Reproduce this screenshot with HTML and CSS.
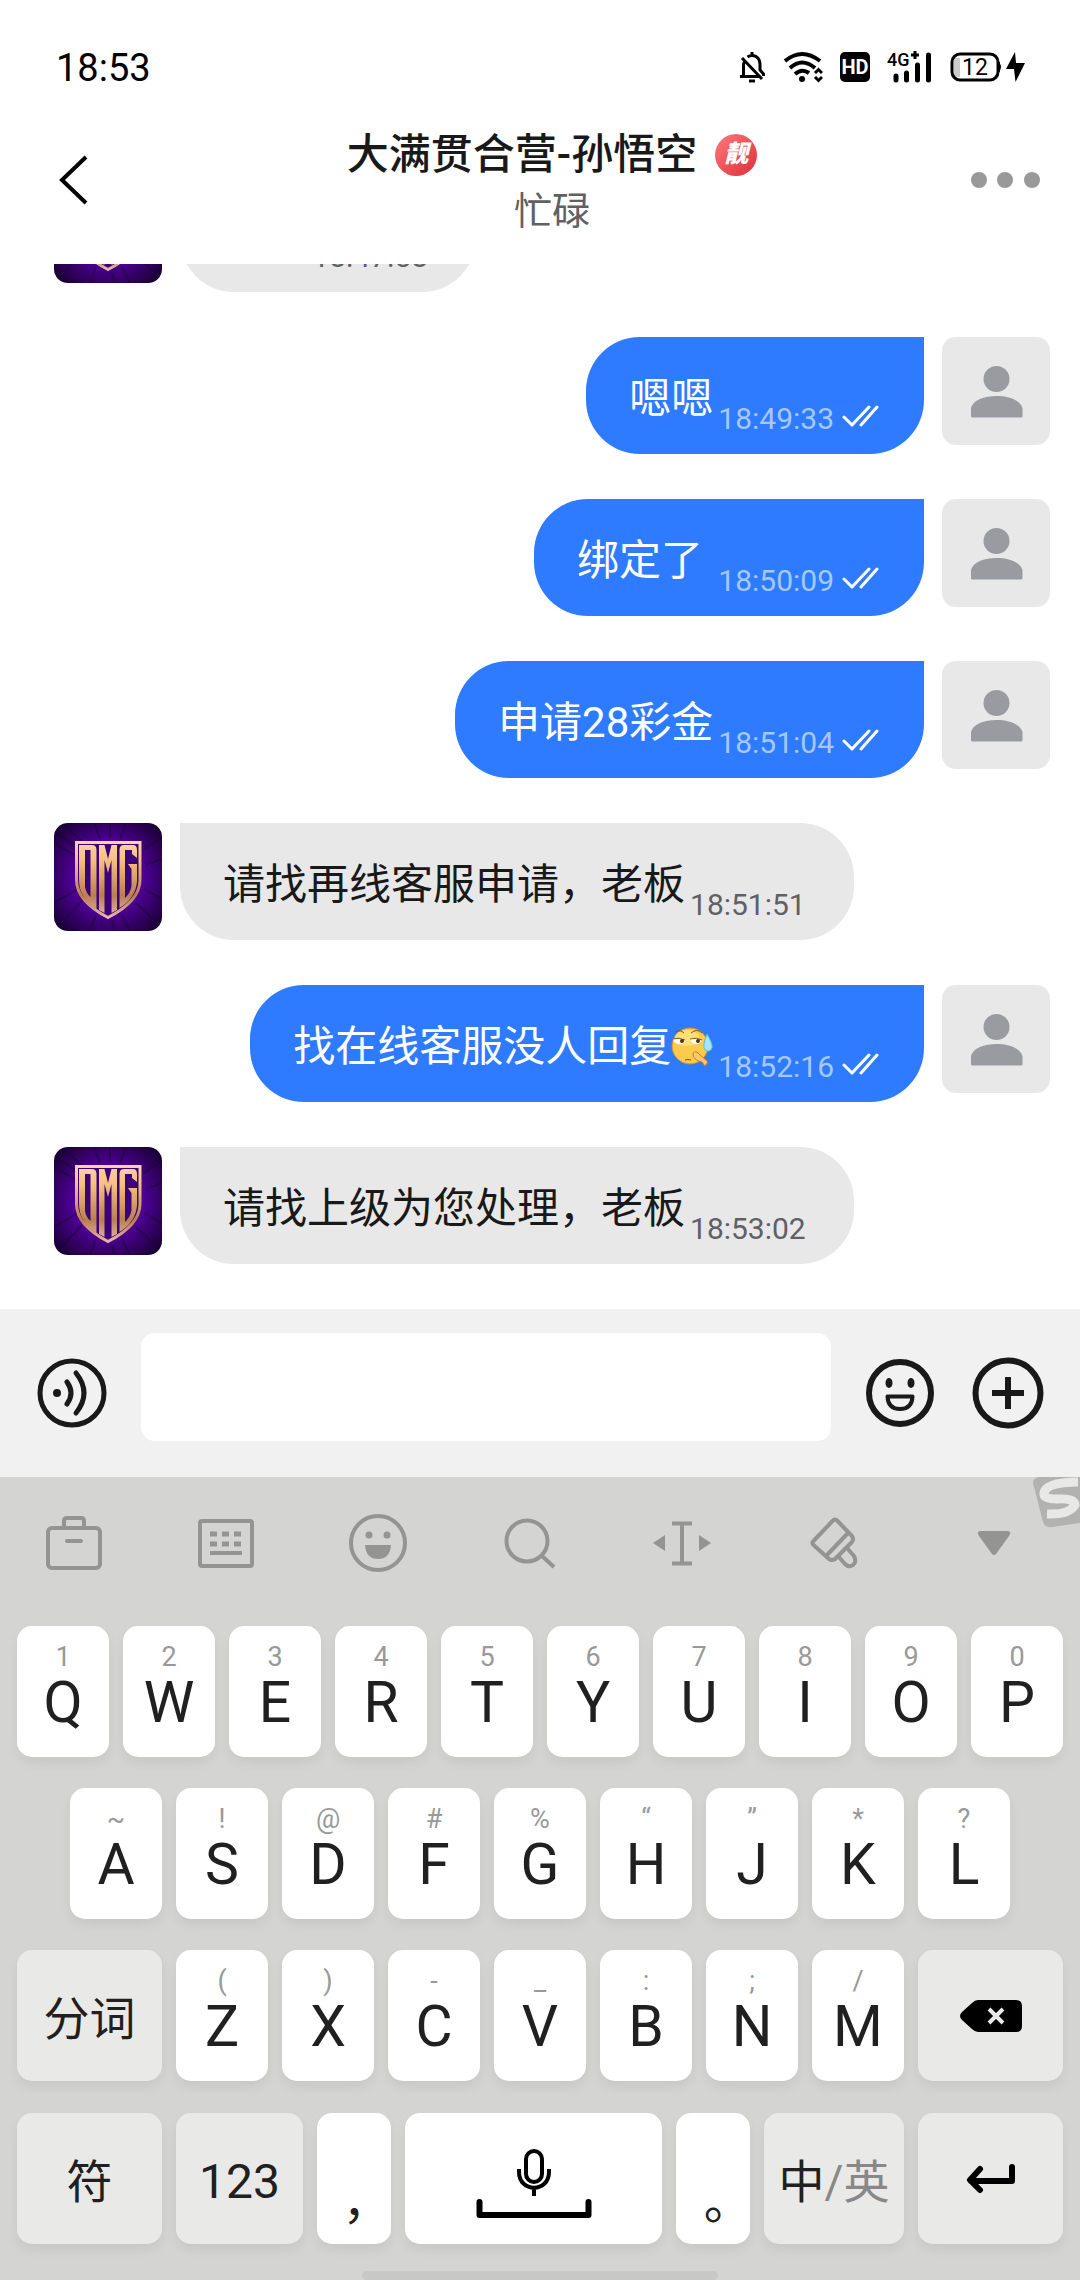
FILE: index.html
```html
<!DOCTYPE html>
<html lang="zh-CN">
<head>
<meta charset="utf-8">
<meta name="viewport" content="width=device-width, initial-scale=1">
<title>大满贯合营-孙悟空</title>
<link rel="stylesheet" href="styles.css">
</head>
<body>
<svg class="sprite" aria-hidden="true">
  <defs>
    <radialGradient id="glow" cx="50%" cy="50%" r="68%">
      <stop offset="0" stop-color="#7d00dc"/><stop offset=".5" stop-color="#4c0092"/><stop offset="1" stop-color="#14002a"/>
    </radialGradient>
    <linearGradient id="gold" x1="0" y1="18" x2="0" y2="96" gradientUnits="userSpaceOnUse">
      <stop offset="0" stop-color="#fbd3a8"/><stop offset=".25" stop-color="#f6bf82"/><stop offset=".7" stop-color="#b97f52"/><stop offset="1" stop-color="#eab9b0"/>
    </linearGradient>
    <symbol id="emblem" viewBox="0 0 108 108">
      <rect width="108" height="108" fill="url(#glow)"/>
      <path d="M0 20L34 40M0 8L30 30M8 0L36 26M40 0L46 16M56 0V14M72 0L66 16M108 14L90 26M108 36L92 42M0 80L24 66M4 104L28 78M36 108L42 92M60 108L58 98M76 108L68 92M104 100L82 80M108 76L90 66" stroke="#1b0036" stroke-width="2" opacity=".5" fill="none"/>
      <path d="M22.500 19.500H86V57Q86 78 54 94.500Q22.500 78 22.500 57Z" fill="#3d0078" stroke="url(#gold)" stroke-width="3"/>
      <path fill="url(#gold)" fill-rule="evenodd" d="M25 22H38Q42.500 22 42.500 27V86Q25 75 25 57ZM31 27V64Q32 70 36.500 74V27Z"/>
      <path fill="url(#gold)" d="M45 22H50.500L54 36L57.500 22H63V87L57.500 90V37L54 50L50.500 37V90L45 87Z"/>
      <path fill="url(#gold)" d="M70 22H79Q83 22 83 27V35L78 31V27H71V75Q76.500 70 77.500 63V46L74 41H83V58Q82 75 65.500 85V27Q65.500 22 70 22Z"/>
    </symbol>
    <symbol id="person" viewBox="0 0 108 108">
      <circle cx="54.500" cy="42" r="13"/>
      <path d="M29 79V71C31 63 42 59 54.500 59S78 63 80.500 71V79Q80.500 80.500 79 80.500H30.500Q29 80.500 29 79Z"/>
    </symbol>
    <symbol id="read" viewBox="0 0 37 24">
      <path d="M2 13L10 21L27 3M19 21L35 3" fill="none" stroke="#fff" stroke-width="3" stroke-linecap="round" stroke-linejoin="round"/>
    </symbol>
  </defs>
</svg>

<div class="app">
  <div class="status">
    <span class="clock">18:53</span>
    <div class="status-icons">
      <svg width="28" height="32" viewBox="0 0 28 32" fill="none" stroke="#000" stroke-width="3">
        <path d="M2 25.500H21M5.500 25V15Q5.500 12 7 9.500M9.500 6Q11.500 4.500 14 4.500C19 4.500 22 8.500 22 13V19L25.500 23V25M14 1V5M4 7L24 28"/>
        <path d="M11 30H17" stroke-width="3"/>
      </svg>
      <svg width="40" height="32" viewBox="0 0 40 32" fill="none" stroke="#000" stroke-width="4">
        <path d="M2 10Q19 -4 37 10M7 17Q19 6 32 17M12 23Q19 17 26 22"/>
        <circle cx="19" cy="28" r="3" fill="#000" stroke="none"/>
        <path d="M32 22L35.500 18.500L39 22M32 26L35.500 29.500L39 26" stroke-width="3"/>
      </svg>
      <svg width="30" height="32" viewBox="0 0 30 32">
        <rect y="1" width="30" height="30" rx="5"/>
        <text class="hd" x="15" y="23" text-anchor="middle">HD</text>
      </svg>
      <svg class="signal" width="46" height="32" viewBox="0 0 46 32">
        <text class="net" x="0" y="15">4G</text>
        <path d="M28 0V8M24 4H32" stroke="#000" stroke-width="3"/>
        <path d="M9 25V29M19.500 22V29M30.500 14V29M41.500 4V29" stroke="#000" stroke-width="5" stroke-linecap="round"/>
      </svg>
      <svg width="76" height="32" viewBox="0 0 76 32">
        <path d="M4 7H10V26H4Z" fill="#ccc"/>
        <rect x="2" y="3" width="46" height="26" rx="8" fill="none" stroke="#000" stroke-width="3"/>
        <path d="M49 11Q52 16 49 21Z" stroke="#000"/>
        <text class="charge" x="25" y="24" text-anchor="middle">12</text>
        <path d="M65 1L56 18H64L65.500 31L75 12H66Z"/>
      </svg>
    </div>
  </div>

  <header class="header">
    <button class="back" aria-label="返回">
      <svg width="30" height="50" viewBox="0 0 30 50" fill="none" stroke="#000" stroke-width="4"><path d="M28 2L4 25L28 48"/></svg>
    </button>
    <div class="heading">
      <h1 class="title">大满贯合营-孙悟空<span class="badge">靓</span></h1>
      <p class="state">忙碌</p>
    </div>
    <button class="more" aria-label="更多">
      <svg width="70" height="16" viewBox="0 0 70 16" fill="#999"><circle cx="8" cy="8" r="8"/><circle cx="34" cy="8" r="8"/><circle cx="61" cy="8" r="8"/></svg>
    </button>
  </header>

  <main class="messages">
    <div class="message">
      <svg class="avatar"><use href="#emblem"/></svg>
      <div class="bubble short"><time>18:47:58</time></div>
    </div>
    <div class="message own">
      <svg class="avatar"><use href="#person"/></svg>
      <div class="bubble"><span class="text">嗯嗯</span><time>18:49:33</time><svg class="tick"><use href="#read"/></svg></div>
    </div>
    <div class="message own">
      <svg class="avatar"><use href="#person"/></svg>
      <div class="bubble"><span class="text">绑定了 </span><time>18:50:09</time><svg class="tick"><use href="#read"/></svg></div>
    </div>
    <div class="message own">
      <svg class="avatar"><use href="#person"/></svg>
      <div class="bubble"><span class="text">申请28彩金</span><time>18:51:04</time><svg class="tick"><use href="#read"/></svg></div>
    </div>
    <div class="message">
      <svg class="avatar"><use href="#emblem"/></svg>
      <div class="bubble"><span class="text">请找再线客服申请，老板</span><time>18:51:51</time></div>
    </div>
    <div class="message own">
      <svg class="avatar"><use href="#person"/></svg>
      <div class="bubble"><span class="text">找在线客服没人回复<svg class="emoji" viewBox="0 0 42 42">
        <circle cx="19" cy="20" r="18" fill="#fbcb4c" stroke="#d58a24"/>
        <ellipse cx="16" cy="12" rx="12" ry="8" fill="#ffe78c" opacity=".7"/>
        <path d="M2 13Q8 12 14 14Q13 19 7 18Q3 17 2 13ZM19 13Q25 12 31 14Q29 19 24 18Q20 17 19 13Z" fill="#fff"/>
        <path d="M2 13Q8 11 14 14M19 13Q26 11 31 14M4 6Q9 3 13 7M20 7Q26 2 31 7" stroke="#8a5220" stroke-width="1" fill="none"/>
        <circle cx="11" cy="15" r="2" fill="#543010"/><circle cx="27" cy="15" r="2" fill="#543010"/>
        <path d="M14 34Q17 33 20 34" stroke="#8a4b18" fill="none"/>
        <path d="M22 28Q23 24 27 27L37 36L34 40L31 36Q22 34 22 28Z" fill="#ffc96a" stroke="#cf7d28"/>
        <path d="M36 8Q42 18 41 22Q39 27 34 24Q31 20 36 8Z" fill="#a5e6f4" stroke="#5fb8dd"/>
      </svg></span><time>18:52:16</time><svg class="tick"><use href="#read"/></svg></div>
    </div>
    <div class="message">
      <svg class="avatar"><use href="#emblem"/></svg>
      <div class="bubble"><span class="text">请找上级为您处理，老板</span><time>18:53:02</time></div>
    </div>
  </main>

  <form class="composer">
    <button type="button" aria-label="语音">
      <svg width="72" height="72" viewBox="0 0 72 72" fill="none" stroke="#191919" stroke-width="5">
        <circle cx="36" cy="36" r="32"/><circle cx="21" cy="36" r="4" fill="#191919" stroke="none"/>
        <path d="M31 25Q39 36 31 47M40 16Q56 36 40 56" stroke-linecap="round"/>
      </svg>
    </button>
    <input class="entry" type="text" aria-label="消息">
    <button type="button" aria-label="表情">
      <svg width="72" height="72" viewBox="0 0 72 72" fill="none" stroke="#191919" stroke-width="6">
        <circle cx="36" cy="36" r="31"/>
        <path d="M23.500 39.500H48.500Q48 52 36 52T23.500 39.500Z" stroke-width="4" stroke-linejoin="round"/>
        <g fill="#191919" stroke="none"><ellipse cx="25" cy="26" rx="3.500" ry="5"/><ellipse cx="47" cy="26" rx="3.500" ry="5"/></g>
      </svg>
    </button>
    <button type="button" class="plus" aria-label="添加">
      <svg width="72" height="72" viewBox="0 0 72 72" fill="none" stroke="#191919" stroke-width="6"><circle cx="36" cy="36" r="32.500"/><path d="M36 20V52M20 36H52"/></svg>
    </button>
  </form>

  <section class="keyboard" aria-label="键盘">
    <svg class="sogou" viewBox="0 0 47 52" aria-hidden="true">
      <path d="M0 6Q0 1 6 0H47V46L19 50Q12 51 10 45Z" fill="#b2b2b0"/>
      <path d="M45 5Q13 5 11 16Q10 22 24 22Q42 21 42 28Q36 38 14 37" fill="none" stroke="#e8e8e6" stroke-width="9"/>
    </svg>
    <div class="tools">
      <button aria-label="工具箱"><svg width="60" height="60" viewBox="0 0 60 60"><rect x="4" y="15" width="52" height="40" rx="4"/><path d="M20 15V8Q20 5 23 5H37Q40 5 40 8V15M23 28H37" stroke-linecap="round"/></svg></button>
      <button aria-label="键盘布局"><svg width="60" height="60" viewBox="0 0 60 60"><rect x="4" y="8" width="52" height="45" rx="2"/><path d="M14 21H46M14 31H46" stroke-width="5" stroke-dasharray="7 5"/><path d="M14 40H46"/></svg></button>
      <button aria-label="表情"><svg width="60" height="60" viewBox="0 0 60 60"><circle cx="30" cy="30" r="27"/><g class="solid"><circle cx="21" cy="22" r="3.500"/><circle cx="39" cy="22" r="3.500"/><path d="M17 32H43Q42 46 30 46T17 32Z"/></g></svg></button>
      <button aria-label="搜索"><svg width="60" height="60" viewBox="0 0 60 60"><circle cx="27" cy="28" r="20.500"/><path d="M42 43L54 54"/></svg></button>
      <button aria-label="移动光标"><svg width="60" height="60" viewBox="0 0 60 60"><path d="M20 10.500H40M20 50.500H40M30 10V50"/><path class="solid" d="M1 30L13 22V38ZM59 30L47 22V38Z"/></svg></button>
      <button aria-label="皮肤"><svg width="60" height="60" viewBox="5 0 60 60" stroke-linejoin="round"><path d="M33.500 8Q36 5 38.500 8L53 23Q55 26 53 29L36 46Q33 48 30 46L14.500 32Q12.500 30 14.500 28ZM50 19L28 42M39 43L46 51Q50 55 54 52T55 43L48 35"/></svg></button>
      <button aria-label="收起键盘"><svg width="60" height="60" viewBox="0 0 60 60"><path class="solid" d="M16 18H44Q48 19 45 23L32 41Q30 43 28 41L15 23Q12 19 16 18Z"/></svg></button>
    </div>
    <div class="keys">
      <div class="row">
        <button class="key"><small>1</small>Q</button><button class="key"><small>2</small>W</button><button class="key"><small>3</small>E</button><button class="key"><small>4</small>R</button><button class="key"><small>5</small>T</button><button class="key"><small>6</small>Y</button><button class="key"><small>7</small>U</button><button class="key"><small>8</small>I</button><button class="key"><small>9</small>O</button><button class="key"><small>0</small>P</button>
      </div>
      <div class="row inset">
        <button class="key"><small>~</small>A</button><button class="key"><small>!</small>S</button><button class="key"><small>@</small>D</button><button class="key"><small>#</small>F</button><button class="key"><small>%</small>G</button><button class="key"><small>“</small>H</button><button class="key"><small>”</small>J</button><button class="key"><small>*</small>K</button><button class="key"><small>?</small>L</button>
      </div>
      <div class="row">
        <button class="key fn edge">分词</button><button class="key"><small>(</small>Z</button><button class="key"><small>)</small>X</button><button class="key"><small>-</small>C</button><button class="key"><small>_</small>V</button><button class="key"><small>:</small>B</button><button class="key"><small>;</small>N</button><button class="key"><small>/</small>M</button>
        <button class="key fn edge" aria-label="删除"><svg width="62" height="32" viewBox="0 0 62 32"><path d="M18 0H56Q62 0 62 6V26Q62 32 56 32H18Q15 32 12 29L2 20Q-2 16 2 12L12 3Q15 0 18 0Z"/><path d="M29 9L43 23M43 9L29 23" stroke="#e9e9e7" stroke-width="4"/></svg></button>
      </div>
      <div class="row bottom">
        <button class="key fn edge">符</button>
        <button class="key fn digits">123</button>
        <button class="key mark">，</button>
        <button class="key space" aria-label="空格"><svg width="116" height="70" viewBox="0 0 116 70" fill="none" stroke="#000" stroke-width="4"><rect x="50" y="2" width="16" height="31" rx="8"/><path d="M43 20V23C43 44 73 44 73 23V20M58 39V47"/><path d="M3.500 53V66H112.500V53" stroke-width="6" stroke-linecap="round" stroke-linejoin="round"/></svg></button>
        <button class="key mark">。</button>
        <button class="key fn lang"><span>中<i>/英</i></span></button>
        <button class="key fn edge" aria-label="换行"><svg width="50" height="32" viewBox="0 0 50 32" fill="none" stroke="#000" stroke-width="6" stroke-linecap="round" stroke-linejoin="round"><path d="M46 4V18H5M14 6L4 17L14 27"/></svg></button>
      </div>
    </div>
    <div class="home-bar"></div>
  </section>
</div>
</body>
</html>
```
FILE: styles.css
```css
* { box-sizing: border-box; }

body {
  margin: 0;
  background: #fff;
  color: #191919;
  font-family: Roboto, "Noto Sans CJK SC", sans-serif;
}

button {
  margin: 0;
  padding: 0;
  border: 0;
  background: none;
  color: inherit;
  font: inherit;
}

svg { display: block; flex: none; }

.sprite { position: absolute; width: 0; height: 0; }

.app {
  display: flex;
  flex-direction: column;
  height: 100vh;
  overflow: hidden;
}

/* Status bar */
.status {
  display: flex;
  flex: none;
  align-items: center;
  justify-content: space-between;
  height: 96px;
  padding: 38px 54px 0 56px;
}
.clock { padding-top: 2px; color: #000; font-size: 38px; line-height: 48px; }
.status-icons { display: flex; align-items: center; gap: 17px; }
.signal { overflow: visible; }
.hd { fill: #fff; font-size: 20px; font-weight: 700; }
.net { font-size: 18px; font-weight: 500; }
.charge { font-size: 23px; }

/* Chat header */
.header { display: flex; flex: none; height: 168px; }
.back { width: 144px; padding-left: 58px; }
.more { width: 120px; padding-left: 11px; }
.heading {
  display: flex;
  flex: 1;
  flex-direction: column;
  align-items: center;
  justify-content: center;
  padding-top: 6px;
}
.title {
  display: flex;
  align-items: center;
  gap: 18px;
  margin: 0;
  font-size: 42px;
  font-weight: 500;
  line-height: 56px;
}
.badge {
  width: 42px;
  height: 42px;
  border-radius: 50%;
  background: linear-gradient(135deg, #fb7a7c, #dd2f38);
  color: #fff;
  font-size: 24px;
  font-style: italic;
  font-weight: 900;
  line-height: 40px;
  text-align: center;
}
.state { margin: 0; color: #5f6063; font-size: 38px; line-height: 56px; }

/* Messages: the list is scrolled to its end */
.messages {
  display: flex;
  flex: 1;
  flex-direction: column;
  justify-content: flex-end;
  gap: 45px;
  min-height: 0;
  padding: 0 30px 45px 54px;
  overflow: hidden;
}
.message { display: flex; flex: none; align-items: flex-start; gap: 18px; }
.own { flex-direction: row-reverse; }
.avatar { width: 108px; height: 108px; border-radius: 14px; }
.own .avatar { background: #e8e8e8; fill: #9a9ba1; }
.bubble {
  display: flex;
  align-items: flex-end;
  justify-content: flex-end;
  height: 117px;
  padding: 0 48px 17px 43px;
  border-radius: 0 54px 54px 54px;
  background: #e8e8e8;
}
.short { min-width: 296px; }
.own .bubble {
  padding-right: 45px;
  border-radius: 54px 0 54px 54px;
  background: #2e7bff;
  color: #fff;
}
.text {
  display: flex;
  align-items: center;
  margin-right: 5px;
  padding-bottom: 10px;
  font-size: 42px;
  line-height: 56px;
  white-space: pre;
}
.emoji { width: 42px; height: 42px; }
time { color: #5f6063; font-size: 30px; line-height: 36px; }
.own time { color: #a5c8ff; }
.tick { width: 37px; height: 24px; margin: 0 0 9px 8px; }

/* Composer */
.composer {
  display: flex;
  flex: none;
  align-items: center;
  gap: 33px;
  height: 168px;
  padding: 0 36px;
  background: #f1f1f1;
}
.entry {
  flex: 1;
  min-width: 0;
  height: 108px;
  margin-bottom: 12px;
  padding: 0 24px;
  border: 0;
  border-radius: 14px;
  background: #fff;
  font: inherit;
  font-size: 42px;
}
.plus { margin-left: 3px; }

/* Keyboard */
.keyboard {
  position: relative;
  flex: none;
  padding: 0 17px;
  overflow: hidden;
  background: #d4d4d2;
}
.sogou { position: absolute; top: 0; right: 0; width: 47px; height: 52px; }
.tools {
  display: grid;
  grid-template-columns: repeat(6, 19fr) 21fr;
  margin: 0 -15px 17px -19px;
}
.tools button { display: grid; place-items: center; height: 132px; }
.tools svg { fill: none; stroke: #949492; stroke-width: 4; }
.tools .solid { fill: #949492; stroke: none; }
.keys { display: grid; gap: 31px; }
.row { display: flex; gap: 14px; }
.inset { padding: 0 53px; }
.bottom { padding-top: 1px; }
.key {
  display: flex;
  flex: 92 1 0;
  flex-direction: column;
  align-items: center;
  min-width: 0;
  height: 131px;
  padding-top: 15px;
  border-radius: 15px;
  background: #fff;
  box-shadow: 0 6px 12px rgba(0, 0, 0, .06);
  color: #202020;
  font-size: 57px;
  line-height: 60px;
}
.key small { color: #999; font-size: 27px; line-height: 32px; }
.fn { justify-content: center; padding-top: 6px; background: #e9e9e7; font-size: 46px; }
.edge { flex-grow: 145; }
.edge svg { margin-bottom: 6px; }
.digits { flex-grow: 127; font-size: 48px; }
.mark {
  flex-grow: 74;
  justify-content: flex-end;
  padding: 0 0 20px;
  font-family: "Noto Sans CJK TC", sans-serif;
  font-size: 48px;
  line-height: 24px;
}
.space { flex-grow: 257; padding-top: 36px; }
.lang { flex-grow: 140; }
.lang i { color: #888; font-style: normal; }
.home-bar {
  width: 34%;
  height: 9px;
  margin: 27px auto 0;
  border-radius: 5px;
  background: #c8c8c6;
}
```
